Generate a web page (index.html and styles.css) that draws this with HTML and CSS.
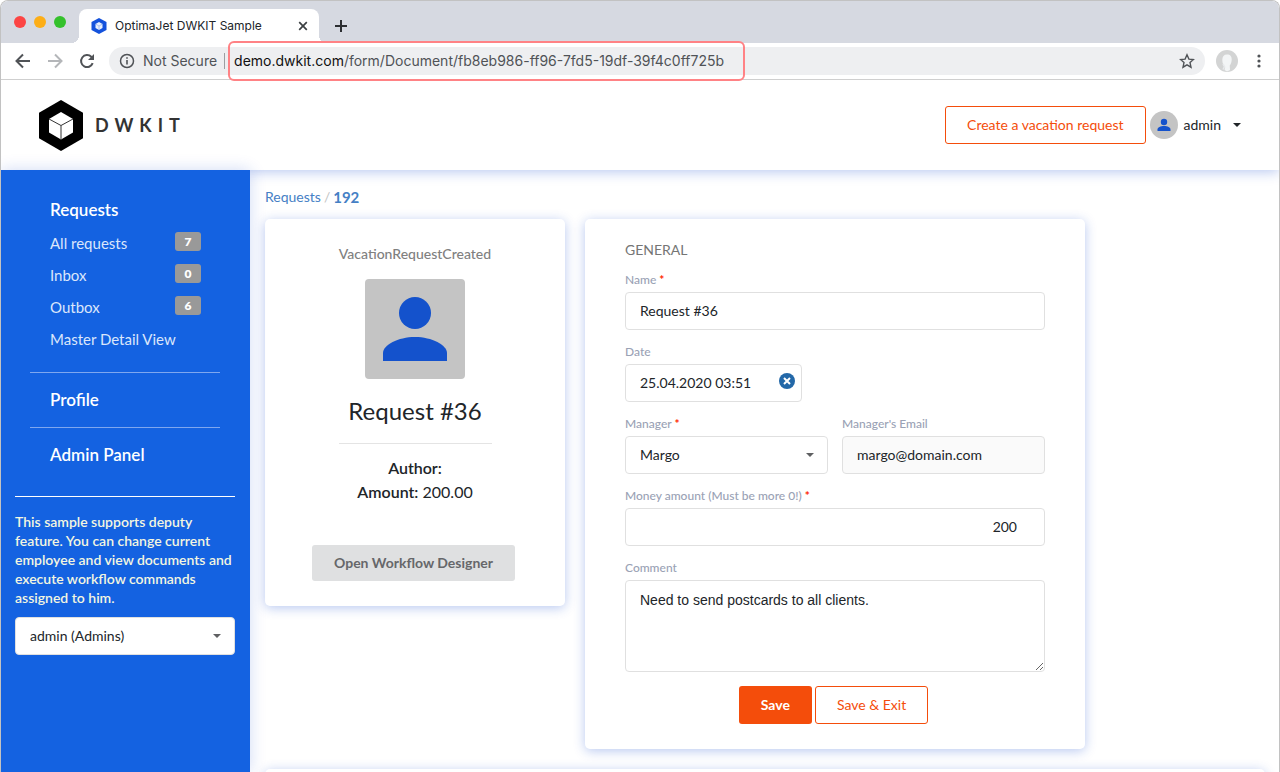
FILE: index.html
```html
<!DOCTYPE html>
<html lang="en">
<head>
  <meta charset="UTF-8">
  <title>OptimaJet DWKIT Sample</title>
  <link rel="stylesheet" href="styles.css">
</head>
<body>
  <div class="window">
    <!-- Browser tabs -->
    <div class="tab-bar">
      <div class="lights">
        <span class="light red"></span>
        <span class="light yellow"></span>
        <span class="light green"></span>
      </div>
      <div class="tab">
        <svg class="favicon" width="16" height="16" viewBox="0 0 16 16">
          <path d="M8 0l7.500 4v8L8 16 .5 12V4z" fill="#1452dc"/>
          <path d="M8 4l3.500 2v4L8 12l-3.500-2V6z" fill="#e8effc"/>
          <path d="M4.500 6L8 8l3.500-2M8 8v4" fill="none" stroke="#7fa2ee" stroke-width=".6"/>
        </svg>
        <span class="tab-title">OptimaJet DWKIT Sample</span>
        <button class="icon-btn" type="button" aria-label="Close tab">
          <svg width="10" height="10" viewBox="0 0 10 10"><path d="M1.200 1.200l7.600 7.600M8.800 1.200L1.200 8.800" stroke="#3c4043" stroke-width="1.700"/></svg>
        </button>
      </div>
      <button class="icon-btn new-tab" type="button" aria-label="New tab">
        <svg width="12" height="12" viewBox="0 0 12 12"><path d="M6 0v12M0 6h12" stroke="#2c2e31" stroke-width="2"/></svg>
      </button>
    </div>

    <!-- Browser toolbar -->
    <div class="toolbar">
      <button class="icon-btn" type="button" aria-label="Back">
        <svg width="16" height="16" viewBox="0 0 16 16"><path d="M15 8H2M8 1.500L1.500 8 8 14.500" fill="none" stroke="#505357" stroke-width="2"/></svg>
      </button>
      <button class="icon-btn" type="button" aria-label="Forward">
        <svg width="16" height="16" viewBox="0 0 16 16"><path d="M1 8h13M8 1.500L14.500 8 8 14.500" fill="none" stroke="#b4b6b9" stroke-width="2"/></svg>
      </button>
      <button class="icon-btn" type="button" aria-label="Reload">
        <svg width="16" height="16" viewBox="0 0 16 16"><path d="M13.700 10.200A6 6 0 1 1 12.300 3.800L14 5.500" fill="none" stroke="#505357" stroke-width="2"/><path d="M15 1v6H9z" fill="#505357"/></svg>
      </button>
      <div class="address">
        <svg width="16" height="16" viewBox="0 0 16 16"><circle cx="8" cy="8" r="6.500" fill="none" stroke="#505357" stroke-width="1.500"/><path d="M8 7v4.500M8 4.200v1.600" stroke="#505357" stroke-width="1.600"/></svg>
        <span class="secure">Not Secure</span>
        <div class="url"><span class="host">demo.dwkit.com</span>/form/Document/fb8eb986-ff96-7fd5-19df-39f4c0ff725b</div>
        <button class="icon-btn star" type="button" aria-label="Bookmark">
          <svg width="16" height="16" viewBox="0 0 16 16"><path d="M8 1.800l1.900 4.300 4.600.4-3.500 3.100 1 4.600L8 11.800l-4 2.400 1-4.600L1.500 6.500l4.600-.4z" fill="none" stroke="#505357" stroke-width="1.400"/></svg>
        </button>
      </div>
      <svg class="profile" width="22" height="22" viewBox="0 0 22 22">
        <circle cx="11" cy="11" r="11" fill="#d3d4d4"/>
        <path d="M11 4.500c3.300 0 5 2 4.700 5.500-.2 3-1.200 4.700-2 5.500l.3 4.500-3 1.500-2.500-1.500.7-3C7.500 16 6.300 13 6.300 10c0-3.500 1.500-5.500 4.700-5.500z" fill="#f3f5f6"/>
        <path d="M7 14l1.500 2.500-1.500 3" fill="none" stroke="#e8eaec" stroke-width="1.500"/>
      </svg>
      <button class="icon-btn" type="button" aria-label="Menu">
        <svg width="4" height="14" viewBox="0 0 4 14" fill="#505357"><circle cx="2" cy="2" r="1.600"/><circle cx="2" cy="7" r="1.600"/><circle cx="2" cy="12" r="1.600"/></svg>
      </button>
    </div>

    <header class="header">
      <a class="logo" href="#">
        <svg width="44" height="51" viewBox="0 0 44 51">
          <path d="M22 0l22 12.700v25.600L22 51 0 38.300V12.700z" fill="#000"/>
          <path d="M22 12l12 7v13.500l-12 7-12-7V19z" fill="#fff"/>
          <path d="M10 19l12 6.500L34 19M22 25.500v14" fill="none" stroke="#333"/>
        </svg>
        <span class="logo-text">DWKIT</span>
      </a>
      <div class="header-right">
        <button class="btn btn-outline" type="button">Create a vacation request</button>
        <button class="user" type="button">
          <svg width="28" height="28" viewBox="0 0 28 28">
            <circle cx="14" cy="14" r="14" fill="#c4c4c4"/>
            <circle cx="14" cy="11" r="3.200" fill="#1452cc"/>
            <path d="M7.500 20v-1.500c0-2 3-3.500 6.500-3.500s6.500 1.500 6.500 3.500V20z" fill="#1452cc"/>
          </svg>
          <span>admin</span>
          <span class="caret"></span>
        </button>
      </div>
    </header>

    <div class="body">
      <aside class="sidebar">
        <nav>
          <div class="group">
            <a class="group-title" href="#">Requests</a>
            <ul class="menu">
              <li><a href="#">All requests</a><span class="badge">7</span></li>
              <li><a href="#">Inbox</a><span class="badge">0</span></li>
              <li><a href="#">Outbox</a><span class="badge">6</span></li>
              <li><a href="#">Master Detail View</a></li>
            </ul>
          </div>
          <div class="group"><a class="group-title" href="#">Profile</a></div>
          <div class="group"><a class="group-title" href="#">Admin Panel</a></div>
        </nav>
        <div class="deputy">
          <label for="employee">This sample supports deputy feature. You can change current employee and view documents and execute workflow commands assigned to him.</label>
          <div class="select">
            <select id="employee"><option>admin (Admins)</option></select>
          </div>
        </div>
      </aside>

      <main class="content">
        <div class="breadcrumb">
          <a href="#">Requests</a>
          <span class="slash">/</span>
          <a class="current" href="#">192</a>
        </div>
        <div class="cards">
          <section class="card summary">
            <div class="state">VacationRequestCreated</div>
            <svg class="picture" width="100" height="100" viewBox="0 0 100 100">
              <rect width="100" height="100" rx="4" fill="#c4c4c4"/>
              <circle cx="50" cy="34" r="16" fill="#1452cc"/>
              <path d="M18 82v-8c0-8 15-16 32-16s32 8 32 16v8z" fill="#1452cc"/>
            </svg>
            <h1>Request #36</h1>
            <div class="info">
              <div><b>Author:</b></div>
              <div><b>Amount:</b> 200.00</div>
            </div>
            <button class="btn btn-grey" type="button">Open Workflow Designer</button>
          </section>

          <form class="card details">
            <h2>GENERAL</h2>
            <div class="field">
              <label for="name">Name <i>*</i></label>
              <input type="text" id="name" value="Request #36">
            </div>
            <div class="field date">
              <label for="date">Date</label>
              <input type="text" id="date" value="25.04.2020 03:51">
              <button class="clear" type="button" aria-label="Clear date">
                <svg width="16" height="16" viewBox="0 0 16 16"><circle cx="8" cy="8" r="8" fill="#2368a8"/><path d="M5 5l6 6M11 5l-6 6" stroke="#fff" stroke-width="2"/></svg>
              </button>
            </div>
            <div class="row">
              <div class="field">
                <label for="manager">Manager <i>*</i></label>
                <div class="select">
                  <select id="manager"><option>Margo</option></select>
                </div>
              </div>
              <div class="field">
                <label for="email">Manager's Email</label>
                <input type="text" id="email" value="margo@domain.com" readonly>
              </div>
            </div>
            <div class="field">
              <label for="amount">Money amount (Must be more 0!) <i>*</i></label>
              <input class="number" type="text" id="amount" value="200">
            </div>
            <div class="field">
              <label for="comment">Comment</label>
              <textarea id="comment">Need to send postcards to all clients.</textarea>
            </div>
            <div class="actions">
              <button class="btn btn-primary" type="button">Save</button>
              <button class="btn btn-outline" type="button">Save &amp; Exit</button>
            </div>
          </form>
        </div>
        <section class="card history"></section>
      </main>
    </div>
  </div>
</body>
</html>
```
FILE: styles.css
```css
* {
  box-sizing: border-box;
}
body {
  margin: 0;
  background: #fff;
  color: #212529;
  font-family: Lato, "Liberation Sans", sans-serif;
  font-size: 14px;
  line-height: 20px;
}
button, input, select, textarea {
  font: inherit;
  color: inherit;
}
a {
  text-decoration: none;
}
svg {
  display: block;
  flex-shrink: 0;
}
.window {
  height: 100vh;
  display: flex;
  flex-direction: column;
  overflow: hidden;
  border: 1px solid #c2c2c2;
  border-bottom: 0;
  border-radius: 8px 8px 0 0;
}

/* browser */
.tab-bar, .toolbar {
  font-family: Inter, Roboto, sans-serif;
  display: flex;
  flex-shrink: 0;
}
.tab-bar {
  height: 42px;
  background: #d6d9e1;
}
.lights {
  display: flex;
  gap: 8px;
  padding: 15px 0 0 13px;
  width: 78px;
}
.light {
  width: 12px;
  height: 12px;
  border-radius: 50%;
}
.red {
  background: #fc4544;
}
.yellow {
  background: #fdae17;
}
.green {
  background: #34c12c;
}
.tab {
  position: relative;
  display: flex;
  align-items: center;
  width: 240px;
  margin-top: 8px;
  padding: 0 11px 0 12px;
  background: #fff;
  border-radius: 8px 8px 0 0;
  font-size: 12px;
}
.tab::before, .tab::after {
  content: "";
  position: absolute;
  bottom: 0;
  width: 8px;
  height: 8px;
}
.tab::before {
  left: -8px;
  background: radial-gradient(circle at 0 0, transparent 8px, #fff 8px);
}
.tab::after {
  right: -8px;
  background: radial-gradient(circle at 100% 0, transparent 8px, #fff 8px);
}
.tab-title {
  flex: 1;
  margin-left: 8px;
}
.icon-btn {
  padding: 0;
  border: 0;
  background: none;
  cursor: pointer;
}
.new-tab {
  margin: 8px 0 0 16px;
}
.toolbar {
  position: relative;
  z-index: 2;
  height: 37px;
  align-items: center;
  gap: 16px;
  padding: 0 18px 0 14px;
  background: #fff;
  border-bottom: 1px solid #cfcfcf;
}
.address {
  flex: 1;
  display: flex;
  align-items: center;
  height: 28px;
  margin-right: -5px;
  margin-left: -2px;
  padding: 0 10px;
  background: #eeeff1;
  border-radius: 14px;
  color: #505357;
}
.secure {
  margin-left: 8px;
  padding-right: 7px;
  border-right: 1px solid #9c9ea1;
  line-height: 16px;
}
.url {
  height: 40px;
  margin-left: 3px;
  padding: 0 19px 0 4px;
  border: 2px solid #ff8285;
  border-radius: 6px;
  line-height: 36px;
  white-space: nowrap;
}
.host {
  color: #111;
}
.star {
  margin-left: auto;
}
.profile {
  margin-right: 3px;
}

/* header */
.header {
  position: relative;
  z-index: 1;
  display: flex;
  align-items: center;
  justify-content: space-between;
  flex-shrink: 0;
  height: 90px;
  padding: 0 38px;
  background: #fff;
  box-shadow: 0 2px 12px rgba(20, 72, 204, 0.3);
}
.logo {
  display: flex;
  align-items: center;
  gap: 12px;
  color: #333;
}
.logo-text {
  font-size: 18px;
  font-weight: 700;
  letter-spacing: 6px;
}
.header-right {
  display: flex;
  align-items: center;
  gap: 4px;
}
.user {
  display: flex;
  align-items: center;
  gap: 6px;
  padding: 0;
  border: 0;
  background: none;
  cursor: pointer;
}
.caret {
  margin-left: 6px;
  border: 4px solid transparent;
  border-top-color: #212529;
  border-bottom: 0;
}
.btn {
  height: 38px;
  padding: 0 21px;
  border: 1px solid transparent;
  border-radius: 3px;
  cursor: pointer;
}
.btn-outline {
  background: #fff;
  border-color: #f44d0b;
  color: #f44d0b;
}
.btn-primary {
  background: #f44d0b;
  color: #fff;
  font-weight: 700;
}
.btn-grey {
  height: 36px;
  background: #dfe0e1;
  color: #66676a;
  font-weight: 700;
}

/* sidebar */
.body {
  flex: 1;
  display: flex;
  min-height: 0;
}
.sidebar {
  position: relative;
  z-index: 2;
  flex-shrink: 0;
  width: 249px;
  padding: 13px 15px 0 14px;
  background: #1462e1;
  box-shadow: 0 0 15px rgba(20, 72, 204, 0.2);
}
.group {
  margin: 0 15px;
  padding: 10px 19px 10px 20px;
}
.group + .group {
  border-top: 1px solid #7fa7ef;
}
.group-title {
  display: block;
  color: #fff;
  font-size: 17px;
  font-weight: 600;
  line-height: 34px;
}
.menu {
  list-style: none;
  margin: 0 0 7px;
  padding: 0;
}
.menu li {
  display: flex;
  align-items: center;
  justify-content: space-between;
  height: 32px;
}
.menu a {
  color: #dbe6fb;
  font-size: 15px;
  white-space: nowrap;
}
.badge {
  width: 26px;
  margin-bottom: 3px;
  background: #999;
  border-radius: 3px;
  color: #fff;
  font-size: 12px;
  font-weight: 800;
  line-height: 19px;
  text-align: center;
}
.deputy {
  margin-top: 14px;
  padding-top: 15px;
  border-top: 1px solid #fff;
}
.deputy label {
  display: block;
  margin-bottom: 10px;
  color: #f3f6e0;
  font-weight: 600;
  line-height: 19px;
}
.deputy select {
  color: #212529;
}

/* content */
.content {
  flex: 1;
  min-width: 0;
  padding: 17px 14px 0 15px;
}
.breadcrumb {
  display: flex;
  gap: 3px;
  margin-bottom: 12px;
}
.breadcrumb a {
  color: #4580c5;
}
.breadcrumb .current {
  font-size: 15px;
  font-weight: 700;
}
.slash {
  color: #c4c4c4;
}
.cards {
  display: flex;
  align-items: flex-start;
  gap: 20px;
}
.card {
  background: #fff;
  border-radius: 5px;
  box-shadow: 0 2px 12px rgba(20, 72, 204, 0.3);
}
.summary {
  display: flex;
  flex-direction: column;
  align-items: center;
  width: 300px;
  padding: 25px;
}
.state {
  margin-bottom: 15px;
  color: #808080;
  font-weight: 500;
}
.summary h1 {
  margin: 18px 0;
  font-size: 24px;
  font-weight: 400;
  line-height: 28px;
}
.info {
  width: 153px;
  padding-top: 12px;
  border-top: 1px solid #e4e4e4;
  font-size: 16px;
  line-height: 24px;
  text-align: center;
}
.info b {
  font-weight: 600;
}
.summary .btn {
  margin: 41px 3px 0 0;
}
.details {
  width: 500px;
  padding: 20px 40px 25px;
}
.details h2 {
  margin: 0 0 10px;
  color: #757575;
  font-size: 14px;
  font-weight: 400;
  line-height: 22px;
}
.field {
  flex: 1;
  margin-bottom: 13px;
}
.field label {
  display: block;
  margin-bottom: 3px;
  color: #9aa2b5;
  font-size: 12px;
  font-weight: 500;
  line-height: 18px;
}
.field label i {
  color: #ff2600;
  font-style: normal;
  font-weight: 700;
}
input, select, textarea {
  display: block;
  width: 100%;
  height: 38px;
  padding: 0 14px 2px;
  background: #fff;
  border: 1px solid #e0e0e0;
  border-radius: 4px;
}
select {
  padding-bottom: 0;
  appearance: none;
}
.select {
  position: relative;
}
.select::after {
  content: "";
  position: absolute;
  top: 17px;
  right: 14px;
  border: 4px solid transparent;
  border-top-color: #5f6062;
  border-bottom: 0;
}
input[readonly] {
  background: #fafafa;
}
.number {
  padding-right: 27px;
  text-align: right;
}
textarea {
  height: 92px;
  padding: 9px 14px;
  font-family: "Liberation Sans", Arial, sans-serif;
  resize: vertical;
}
.date {
  position: relative;
  width: 177px;
}
.clear {
  position: absolute;
  right: 7px;
  bottom: 13px;
  padding: 0;
  border: 0;
  background: none;
  cursor: pointer;
}
.row {
  display: flex;
  gap: 14px;
}
.actions {
  display: flex;
  justify-content: center;
  gap: 3px;
  margin: 14px 3px 0 0;
}
.history {
  height: 200px;
  margin-top: 20px;
}
```
